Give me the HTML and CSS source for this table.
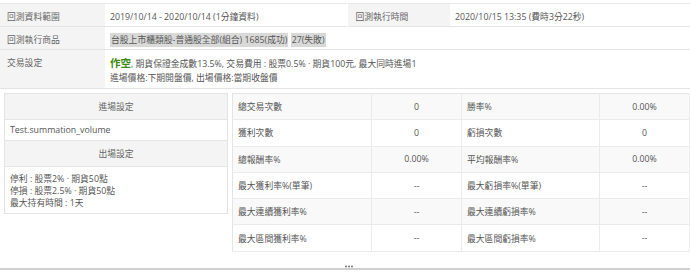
FILE: index.html
```html
<!DOCTYPE html>
<html lang="zh-Hant">
<head>
<meta charset="utf-8">
<link rel="stylesheet" href="styles.css">
</head>
<body>
<table class="info">
  <colgroup><col class="c1"><col class="c2"><col class="c3"><col class="c4"></colgroup>
  <tr class="r1">
    <th>回測資料範圍</th>
    <td>2019/10/14 - 2020/10/14 (1分鐘資料)</td>
    <th class="th2">回測執行時間</th>
    <td>2020/10/15 13:35 (費時3分22秒)</td>
  </tr>
  <tr class="r2">
    <th>回測執行商品</th>
    <td colspan="3"><span class="tag">台股上市櫃類股-普通股全部(組合) 1685(成功)</span> <span class="tag">27(失敗)</span></td>
  </tr>
  <tr class="r3">
    <th>交易設定</th>
    <td colspan="3"><div><span class="dir">作空</span>, 期貨保證金成數13.5%, 交易費用 : 股票0.5% · 期貨100元, 最大同時進場1</div><div>進場價格:下期開盤價, 出場價格:當期收盤價</div></td>
  </tr>
</table>

<div class="lower">
  <table class="setup">
    <tr class="hd"><th>進場設定</th></tr>
    <tr class="t1"><td>Test.summation_volume</td></tr>
    <tr class="hd"><th>出場設定</th></tr>
    <tr class="t2"><td>停利 : 股票2% · 期貨50點<br>停損 : 股票2.5% · 期貨50點<br>最大持有時間 : 1天</td></tr>
  </table>

  <table class="stats">
    <colgroup><col class="s1"><col class="s2"><col class="s3"><col class="s4"></colgroup>
    <tr><td>總交易次數</td><td class="v">0</td><td>勝率%</td><td class="v">0.00%</td></tr>
    <tr><td>獲利次數</td><td class="v">0</td><td>虧損次數</td><td class="v">0</td></tr>
    <tr><td>總報酬率%</td><td class="v">0.00%</td><td>平均報酬率%</td><td class="v">0.00%</td></tr>
    <tr><td>最大獲利率%(單筆)</td><td class="v">--</td><td>最大虧損率%(單筆)</td><td class="v">--</td></tr>
    <tr><td>最大連續獲利率%</td><td class="v">--</td><td>最大連續虧損率%</td><td class="v">--</td></tr>
    <tr><td>最大區間獲利率%</td><td class="v">--</td><td>最大區間虧損率%</td><td class="v">--</td></tr>
  </table>
</div>

<div class="splitter">
  <div class="grip"><svg width="8" height="3" viewBox="0 0 8 3"><circle cx="1" cy="1.5" r="0.9" fill="#666"/><circle cx="4" cy="1.5" r="0.9" fill="#666"/><circle cx="7" cy="1.5" r="0.9" fill="#666"/></svg></div>
  <div class="bar"></div>
</div>
</body>
</html>
```

FILE: styles.css
```css
* { box-sizing: border-box; }
html, body { margin: 0; padding: 0; background: #fff; }
body {
  width: 690px;
  height: 272px;
  overflow: hidden;
  font-family: "Open Sans", "Noto Sans CJK TC", sans-serif;
  font-size: 8.8px;
  color: #555;
}
table { border-collapse: collapse; table-layout: fixed; }
th, td { font-weight: normal; text-align: left; padding: 0; }

.info { width: 690px; margin-top: 3px; border-top: 1px solid #e8e8e8; }
.info .c1 { width: 105px; }
.info .c2 { width: 242px; }
.info .c3 { width: 103px; }
.info .c4 { width: 240px; }
.info tr { border-bottom: 1px solid #e4e4e4; }
.info th { background: #f4f4f4; color: #666; padding: 0 7px; vertical-align: top; }
.info td { padding: 0 5px; vertical-align: top; }
.info .th2 { padding-left: 8px; border-left: 1px solid #fff; }
.info .r1 th, .info .r1 td { height: 23px; padding-top: 6px; }
.info .r2 th, .info .r2 td { height: 23px; padding-top: 6px; }
.info .r3 th, .info .r3 td { height: 39px; padding-top: 6px; line-height: 14px; }
.tag { background: #d9d9d9; color: #555; padding: 1px 1px; }
.dir { color: #3c8a12; font-size: 10.5px; font-weight: bold; }

.lower { display: flex; gap: 4px; padding-left: 4px; margin-top: 4px; align-items: flex-start; }

.setup { width: 225px; border: 1px solid #e4e4e4; }
.setup tr { border-bottom: 1px solid #e4e4e4; }
.setup .hd th { background: #f4f4f4; text-align: center; height: 26px; color: #666; }
.setup .t1 td { height: 21px; padding: 0 5px; }
.setup .t2 td { height: 46px; padding: 6px 5px 4px; line-height: 12px; vertical-align: top; }

.stats { width: 457px; border: 1px solid #e4e4e4; border-right: 0; }
.stats .s1 { width: 139px; }
.stats .s2 { width: 90px; }
.stats .s3 { width: 138px; }
.stats .s4 { width: 90px; }
.stats tr { border-bottom: 1px solid #ebebeb; }
.stats tr:nth-child(odd) { background: #f9f9f9; }
.stats td { height: 26.3px; padding: 0 5px; border-right: 1px solid #ebebeb; }
.stats td.v { text-align: center; }

.splitter { margin-top: 13px; display: flex; flex-direction: column; align-items: center; }
.grip { height: 3px; margin-left: 8px; display: flex; }
.grip svg { display: block; }
.bar { align-self: stretch; height: 2px; background: #d0d0d0; }
```
